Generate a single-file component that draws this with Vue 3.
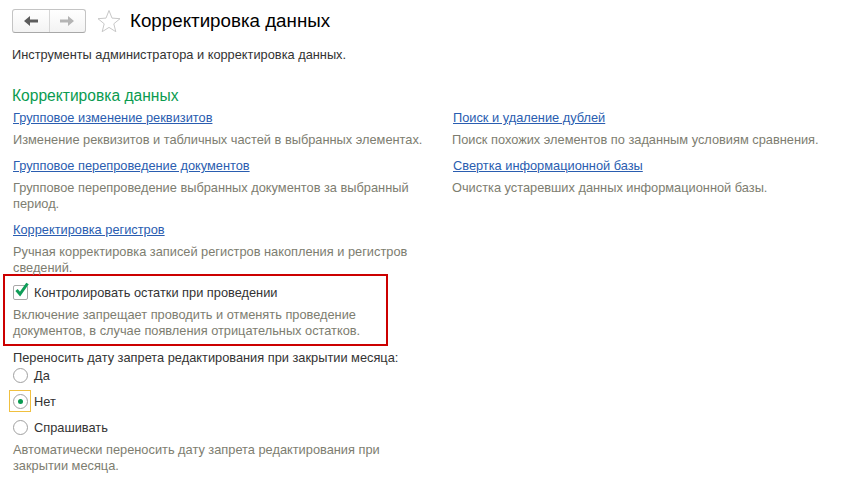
<script setup>
const leftItems = [
  { link: 'Групповое изменение реквизитов', desc: 'Изменение реквизитов и табличных частей в выбранных элементах.' },
  { link: 'Групповое перепроведение документов', desc: 'Групповое перепроведение выбранных документов за выбранный период.' },
  { link: 'Корректировка регистров', desc: 'Ручная корректировка записей регистров накопления и регистров сведений.' },
]
const rightItems = [
  { link: 'Поиск и удаление дублей', desc: 'Поиск похожих элементов по заданным условиям сравнения.' },
  { link: 'Свертка информационной базы', desc: 'Очистка устаревших данных информационной базы.' },
]
const radios = [
  { label: 'Да', on: false },
  { label: 'Нет', on: true },
  { label: 'Спрашивать', on: false },
]
</script>

<template>
  <div class="page">
    <header class="head">
      <div class="nav">
        <button class="nav-btn" type="button">
          <svg width="16" height="12" viewBox="0 0 16 12"><path d="M1 6l6-5v3.500h8v3H7v3.500z" fill="#5c5c5c" /></svg>
        </button>
        <button class="nav-btn" type="button">
          <svg width="16" height="12" viewBox="0 0 16 12"><path d="M15 6L9 1v3.500H1v3h8v3.500z" fill="#b4b4b4" /></svg>
        </button>
      </div>
      <svg class="star" width="24" height="24" viewBox="0 0 24 24">
        <path d="M12 1.500l3 7.600 8 .6-6.200 5.100 2 7.900-6.800-4.300-6.800 4.300 2-7.900L1 9.700l8-.6z" fill="#fff" stroke="#c8c8c8" />
      </svg>
      <h1 class="title">Корректировка данных</h1>
    </header>

    <p class="intro">Инструменты администратора и корректировка данных.</p>

    <h2 class="section">Корректировка данных</h2>

    <div class="columns">
      <div class="col-left">
        <div v-for="item in leftItems" :key="item.link" class="item">
          <a class="link" href="#">{{ item.link }}</a>
          <p class="desc">{{ item.desc }}</p>
        </div>

        <div class="framed">
          <label class="check-row">
            <span class="check">
              <svg width="18" height="18" viewBox="0 0 18 18"><path d="M3.500 8l3.500 4L14.500 1.500" fill="none" stroke="#0f9d58" stroke-width="3" /></svg>
            </span>
            <span>Контролировать остатки при проведении</span>
          </label>
          <p class="desc framed-desc">Включение запрещает проводить и отменять проведение документов, в случае появления отрицательных остатков.</p>
        </div>

        <div class="question">Переносить дату запрета редактирования при закрытии месяца:</div>
        <div class="radios">
          <div v-for="r in radios" :key="r.label" class="radio-row">
            <span class="radio-box" :class="{ focused: r.on }">
              <span class="radio"><span v-if="r.on" class="dot"></span></span>
            </span>
            <span>{{ r.label }}</span>
          </div>
        </div>
        <p class="desc last">Автоматически переносить дату запрета редактирования при закрытии месяца.</p>
      </div>

      <div class="col-right">
        <div v-for="item in rightItems" :key="item.link" class="item">
          <a class="link" href="#">{{ item.link }}</a>
          <p class="desc">{{ item.desc }}</p>
        </div>
      </div>
    </div>
  </div>
</template>

<style scoped>
.page {
  width: 845px;
  height: 504px;
  overflow: hidden;
  box-sizing: border-box;
  padding: 9px 0 0 13px;
  background: #fff;
  font-family: "Liberation Sans", Arial, sans-serif;
  font-size: 12.8px;
  color: #333;
}
.head {
  display: flex;
  align-items: center;
  height: 24px;
  margin-left: -1px;
}
.nav {
  display: flex;
  width: 74px;
  height: 24px;
  box-sizing: border-box;
  border: 1px solid #c4c4c4;
  border-bottom-color: #a8a8a8;
  border-radius: 3px;
  background: linear-gradient(#fff, #f3f3f3);
}
.nav-btn {
  flex: 1;
  display: flex;
  align-items: center;
  justify-content: center;
  padding: 0;
  border: 0;
  background: none;
}
.nav-btn + .nav-btn {
  border-left: 1px solid #d6d6d6;
}
.star {
  margin-left: 11px;
}
.title {
  margin: 0 0 0 9px;
  font-size: 18.75px;
  font-weight: 400;
  color: #000;
}
.intro {
  margin: 14px 0 0 -1px;
  line-height: 16px;
  color: #333;
}
.section {
  margin: 23px 0 0 -1px;
  font-size: 15.6px;
  line-height: 20px;
  font-weight: 400;
  color: #0a9b50;
}
.columns {
  display: flex;
  margin-top: 4px;
}
.col-left {
  width: 410px;
}
.col-right {
  margin-left: 30px;
}
.item {
  margin-bottom: 10px;
}
.link {
  display: block;
  line-height: 16px;
  color: #2a5db0;
  text-decoration: underline;
}
.desc {
  margin: 6px 0 0;
  line-height: 16px;
  color: #7d7d70;
}
.col-right .desc {
  margin-left: -1px;
}
.framed {
  width: 385px;
  height: 72px;
  box-sizing: border-box;
  margin: -12px 0 0 -10px;
  padding: 6px 0 0 8px;
  border: 2px solid #cc0000;
}
.check-row {
  display: flex;
  align-items: center;
  gap: 6px;
  height: 20px;
}
.check {
  width: 13px;
  height: 13px;
  border: 1px solid #a8a8a8;
  border-radius: 2px;
  position: relative;
}
.check svg {
  position: absolute;
  left: -1px;
  top: -4px;
}
.framed-desc {
  margin-top: 5px;
}
.question {
  margin-top: 4px;
  line-height: 16px;
}
.radios {
  margin-top: -4px;
}
.radio-row {
  display: flex;
  align-items: center;
  height: 26px;
}
.radio-box {
  width: 22px;
  height: 22px;
  box-sizing: border-box;
  margin-left: -4px;
  margin-right: 3px;
  display: flex;
  align-items: center;
  justify-content: center;
  border: 1px solid transparent;
}
.radio-box.focused {
  border-color: #f0c040;
}
.radio {
  width: 15px;
  height: 15px;
  box-sizing: border-box;
  border: 1px solid #a0a0a0;
  border-radius: 50%;
  display: flex;
  align-items: center;
  justify-content: center;
  background: #fff;
}
.dot {
  width: 5px;
  height: 5px;
  border-radius: 50%;
  background: #0a9b50;
}
.last {
  margin-top: 2px;
}
</style>
